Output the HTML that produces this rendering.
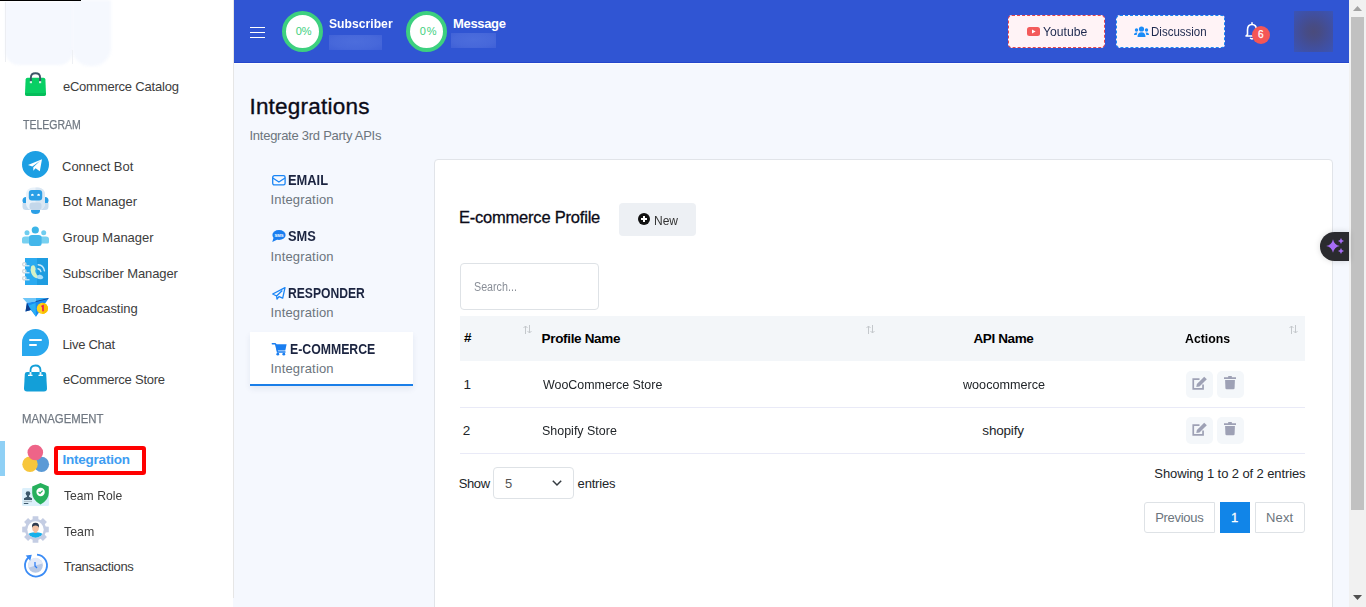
<!DOCTYPE html><html><head><meta charset="utf-8"><title>Integrations</title><style>*{box-sizing:border-box}
html,body{margin:0;padding:0;width:1366px;height:607px;overflow:hidden;background:#f5f8fe;font-family:"Liberation Sans",sans-serif}
.t{position:absolute;white-space:pre;line-height:1}
.a{position:absolute}
svg{position:absolute;overflow:visible}
</style></head><body>
<div class="a" style="left:0;top:0;width:233px;height:607px;background:#fff"></div>
<div class="a" style="left:233px;top:0;width:1px;height:598px;background:#e6e6e6"></div>
<div class="a" style="left:5px;top:2px;width:68px;height:63px;background:#f5f8fe;border-radius:0 0 14px 14px;filter:blur(1.2px)"></div>
<div class="a" style="left:72px;top:0;width:39px;height:66px;background:#f5f8fe;border-radius:0 0 18px 18px;filter:blur(1.5px)"></div>
<div class="a" style="left:5px;top:2px;width:1px;height:60px;background:#eceef2"></div>
<div class="a" style="left:72px;top:50px;width:1px;height:14px;background:#eef0f4"></div>
<div class="a" style="left:0;top:0;width:81px;height:1px;background:#000"></div>
<div class="t" style="left:62.89px;top:80.22px;font-size:13px;letter-spacing:-0.2px;color:#3d3d3d;">eCommerce Catalog</div>
<div class="t" style="left:22.51px;top:118.87px;font-size:12.5px;transform:scaleX(0.8418);transform-origin:0 0;color:#707882;-webkit-text-stroke:0.25px #707882">TELEGRAM</div>
<div class="t" style="left:62.07px;top:160.42px;font-size:13px;letter-spacing:-0.032px;color:#3d3d3d;">Connect Bot</div>
<div class="t" style="left:62.52px;top:195.22px;font-size:13px;letter-spacing:0.023px;color:#3d3d3d;">Bot Manager</div>
<div class="t" style="left:62.57px;top:231.12px;font-size:13px;letter-spacing:0.002px;color:#3d3d3d;">Group Manager</div>
<div class="t" style="left:62.43px;top:267.42px;font-size:13px;letter-spacing:-0.092px;color:#3d3d3d;">Subscriber Manager</div>
<div class="t" style="left:62.42px;top:302.32px;font-size:13px;letter-spacing:-0.058px;color:#3d3d3d;">Broadcasting</div>
<div class="t" style="left:62.42px;top:338.12px;font-size:13px;letter-spacing:-0.278px;color:#3d3d3d;">Live Chat</div>
<div class="t" style="left:62.99px;top:373.42px;font-size:13px;letter-spacing:-0.243px;color:#3d3d3d;">eCommerce Store</div>
<div class="t" style="left:21.75px;top:413.07px;font-size:12.5px;transform:scaleX(0.9084);transform-origin:0 0;color:#707882;-webkit-text-stroke:0.25px #707882">MANAGEMENT</div>
<div class="t" style="left:62.41px;top:453.08px;font-size:13.5px;font-weight:700;letter-spacing:-0.218px;color:#3d9df2;">Integration</div>
<div class="t" style="left:63.67px;top:489.32px;font-size:13px;transform:scaleX(0.9358);transform-origin:0 0;color:#3d3d3d;">Team Role</div>
<div class="t" style="left:63.66px;top:524.92px;font-size:13px;transform:scaleX(0.9491);transform-origin:0 0;color:#3d3d3d;">Team</div>
<div class="t" style="left:63.64px;top:560.22px;font-size:13px;letter-spacing:-0.341px;color:#3d3d3d;">Transactions</div>
<div class="a" style="left:0;top:441px;width:5px;height:35px;background:#8fd0f5"></div>
<div class="a" style="left:54px;top:446px;width:92px;height:29px;border:4px solid #ff0000;border-radius:3px"></div>
<div class="a" style="left:234px;top:0;width:1115px;height:63px;background:#3055d3"></div>
<div class="a" style="left:234px;top:62px;width:1115px;height:1px;background:#2446cc"></div>
<div class="a" style="left:234px;top:63px;width:1115px;height:1px;background:#fff"></div>
<div class="a" style="left:250px;top:26.5px;width:15px;height:1.5px;background:#fff"></div>
<div class="a" style="left:250px;top:31.5px;width:15px;height:1.5px;background:#fff"></div>
<div class="a" style="left:250px;top:36.5px;width:15px;height:1.5px;background:#fff"></div>
<div class="a" style="left:282px;top:11px;width:41px;height:41px;border-radius:50%;background:#fff;border:4px solid #3dd07f"></div>
<div class="a" style="left:406px;top:11px;width:41px;height:41px;border-radius:50%;background:#fff;border:4px solid #3dd07f"></div>
<div class="t" style="left:295.66px;top:26.15px;font-size:11px;letter-spacing:-0.113px;color:#3ecf7e;">0%</div>
<div class="t" style="left:419.86px;top:26.15px;font-size:11px;letter-spacing:0.839px;color:#3ecf7e;">0%</div>
<div class="t" style="left:328.62px;top:16.52px;font-size:13px;font-weight:700;transform:scaleX(0.9368);transform-origin:0 0;color:#ffffff;">Subscriber</div>
<div class="t" style="left:453.12px;top:16.72px;font-size:13px;font-weight:700;letter-spacing:-0.347px;color:#ffffff;">Message</div>
<div class="a" style="left:329px;top:35px;width:53px;height:15px;background:radial-gradient(ellipse at 50% 45%, #4c6ddc 0%, #4768da 60%, #3f60d7 100%);filter:blur(0.5px)"></div>
<div class="a" style="left:451px;top:33px;width:45px;height:15px;background:radial-gradient(ellipse at 50% 45%, #4c6ddc 0%, #4768da 60%, #3f60d7 100%);filter:blur(0.5px)"></div>
<div class="a" style="left:1008px;top:15px;width:97px;height:33px;background:#fff3f6;border:1px dashed #e8464f;border-radius:4px"></div>
<div class="a" style="left:1116px;top:15px;width:109px;height:33px;background:#fff3f6;border:1px dashed #1a86f5;border-radius:4px"></div>
<div class="t" style="left:1042.81px;top:25.12px;font-size:13px;transform:scaleX(0.9357);transform-origin:0 0;color:#1e2a4f;">Youtube</div>
<div class="t" style="left:1151.25px;top:25.22px;font-size:13px;transform:scaleX(0.8859);transform-origin:0 0;color:#1e2a4f;">Discussion</div>
<svg style="left:1027px;top:27px" width="13" height="9" viewBox="0 0 13 9"><rect x="0" y="0" width="13" height="9" rx="2.5" fill="#f35b5b"/><path d="M5 2.6 L8.6 4.5 L5 6.4Z" fill="#fff"/></svg>
<svg style="left:1134px;top:26px" width="15" height="11" viewBox="0 0 15 11"><circle cx="7.5" cy="3" r="2.6" fill="#1b8cf8"/><path d="M3.5 11 Q3.5 6.3 7.5 6.3 Q11.5 6.3 11.5 11Z" fill="#1b8cf8"/><circle cx="2.5" cy="4" r="1.7" fill="#1b8cf8"/><circle cx="12.5" cy="4" r="1.7" fill="#1b8cf8"/><path d="M0 9 Q0 6.5 2.5 6.5 L3.5 6.5 Q2.7 7.8 2.7 9Z" fill="#1b8cf8"/><path d="M15 9 Q15 6.5 12.5 6.5 L11.5 6.5 Q12.3 7.8 12.3 9Z" fill="#1b8cf8"/></svg>
<svg style="left:1245px;top:21px" width="14" height="19" viewBox="0 0 14 19"><path d="M7 1.2 V3 M2.5 13.5 V9 Q2.5 3.5 7 3.5 Q11.5 3.5 11.5 9 V13.5 L13 15 H1 L2.5 13.5Z M5 17 Q7 18.8 9 17" fill="none" stroke="#fff" stroke-width="1.6" stroke-linejoin="round"/></svg>
<div class="a" style="left:1252px;top:26px;width:18px;height:18px;border-radius:50%;background:#f45656"></div>
<div class="t" style="left:1258.02px;top:30.32px;font-size:10px;letter-spacing:0px;color:#ffffff;-webkit-text-stroke:0.25px #fff">6</div>
<div class="a" style="left:1294px;top:11px;width:39px;height:41px;background:radial-gradient(circle at 50% 50%, #4a4b7c 0%, #474c86 25%, #414f9e 60%, #3a54b6 100%)"></div>
<div class="a" style="left:1349px;top:0;width:17px;height:607px;background:#f1f1f1"></div>
<div class="a" style="left:1351px;top:17px;width:13px;height:493px;background:#c1c1c1"></div>
<svg style="left:1353px;top:6px" width="9" height="5" viewBox="0 0 9 5"><path d="M0 5 L4.5 0 L9 5Z" fill="#a3a3a3"/></svg>
<svg style="left:1353px;top:595px" width="9" height="5" viewBox="0 0 9 5"><path d="M0 0 L4.5 5 L9 0Z" fill="#505050"/></svg>
<div class="t" style="left:249.42px;top:95.7px;font-size:22.5px;letter-spacing:0.224px;color:#0b0b18;-webkit-text-stroke:0.35px #0b0b18">Integrations</div>
<div class="t" style="left:249.5px;top:128.92px;font-size:13px;letter-spacing:-0.264px;color:#6c757d;">Integrate 3rd Party APIs</div>
<div class="a" style="left:250px;top:332px;width:163px;height:54px;background:#fff;border-bottom:2px solid #1a7ee8;box-shadow:0 3px 6px rgba(20,50,120,0.08)"></div>
<div class="t" style="left:287.5px;top:172.82px;font-size:14px;font-weight:700;transform:scaleX(0.9195);transform-origin:0 0;color:#1b2440;">EMAIL</div>
<div class="t" style="left:270.5px;top:193.22px;font-size:13px;letter-spacing:0.164px;color:#6c757d;">Integration</div>
<div class="t" style="left:287.51px;top:228.72px;font-size:14px;font-weight:700;transform:scaleX(0.9164);transform-origin:0 0;color:#1b2440;">SMS</div>
<div class="t" style="left:270.5px;top:249.82px;font-size:13px;letter-spacing:0.164px;color:#6c757d;">Integration</div>
<div class="t" style="left:287.56px;top:286.32px;font-size:14px;font-weight:700;transform:scaleX(0.8659);transform-origin:0 0;color:#1b2440;">RESPONDER</div>
<div class="t" style="left:270.5px;top:306.22px;font-size:13px;letter-spacing:0.164px;color:#6c757d;">Integration</div>
<div class="t" style="left:289.54px;top:342.12px;font-size:14px;font-weight:700;transform:scaleX(0.8775);transform-origin:0 0;color:#1b2440;">E-COMMERCE</div>
<div class="t" style="left:270.5px;top:362.12px;font-size:13px;letter-spacing:0.164px;color:#6c757d;">Integration</div>
<div class="a" style="left:434px;top:159px;width:899px;height:460px;background:#fff;border:1px solid #e1e4e9;border-radius:4px"></div>
<div class="t" style="left:458.89px;top:208.95px;font-size:16.5px;letter-spacing:-0.203px;color:#0b0b18;-webkit-text-stroke:0.3px #0b0b18">E-commerce Profile</div>
<div class="a" style="left:619px;top:203px;width:77px;height:33px;background:#edf0f4;border-radius:4px"></div>
<div class="t" style="left:653.71px;top:213.62px;font-size:13px;transform:scaleX(0.9241);transform-origin:0 0;color:#333333;">New</div>
<svg style="left:638px;top:213px" width="12" height="12" viewBox="0 0 12 12"><circle cx="6" cy="6" r="6" fill="#111"/><path d="M6 3 V9 M3 6 H9" stroke="#fff" stroke-width="2"/></svg>
<div class="a" style="left:460px;top:263px;width:139px;height:47px;background:#fff;border:1px solid #dee2e6;border-radius:4px"></div>
<div class="t" style="left:473.71px;top:281.27px;font-size:12.5px;transform:scaleX(0.8567);transform-origin:0 0;color:#8a8f98;">Search...</div>
<div class="a" style="left:460px;top:316px;width:845px;height:45px;background:#f3f6f9"></div>
<div class="a" style="left:460px;top:407px;width:845px;height:1px;background:#e9eaf7"></div>
<div class="a" style="left:460px;top:453px;width:845px;height:1px;background:#e9eaf7"></div>
<div class="t" style="left:464.1px;top:331.18px;font-size:13.5px;font-weight:700;letter-spacing:0px;color:#000000;">#</div>
<div class="t" style="left:541.61px;top:331.88px;font-size:13.5px;font-weight:700;letter-spacing:-0.337px;color:#000000;">Profile Name</div>
<div class="t" style="left:973.52px;top:331.88px;font-size:13.5px;font-weight:700;letter-spacing:-0.396px;color:#000000;">API Name</div>
<div class="t" style="left:1185.47px;top:331.98px;font-size:13.5px;font-weight:700;transform:scaleX(0.9113);transform-origin:0 0;color:#000000;">Actions</div>
<div class="t" style="left:463.54px;top:377.74px;font-size:13.5px;letter-spacing:0px;color:#212529;">1</div>
<div class="t" style="left:542.53px;top:377.74px;font-size:13.5px;transform:scaleX(0.9209);transform-origin:0 0;color:#212529;">WooCommerce Store</div>
<div class="t" style="left:962.76px;top:377.74px;font-size:13.5px;transform:scaleX(0.9342);transform-origin:0 0;color:#212529;">woocommerce</div>
<div class="t" style="left:462.87px;top:424.44px;font-size:13.5px;letter-spacing:0px;color:#212529;">2</div>
<div class="t" style="left:541.72px;top:424.44px;font-size:13.5px;transform:scaleX(0.9232);transform-origin:0 0;color:#212529;">Shopify Store</div>
<div class="t" style="left:982.37px;top:424.44px;font-size:13.5px;letter-spacing:-0.198px;color:#212529;">shopify</div>
<svg style="left:523px;top:325px" width="9" height="9" viewBox="0 0 9 9"><path d="M2.5 9 V1 M0.5 3 L2.5 1 L4.5 3 M6.5 0 V8 M4.5 6 L6.5 8 L8.5 6" fill="none" stroke="#c4c8cc" stroke-width="1"/></svg>
<svg style="left:866px;top:325px" width="9" height="9" viewBox="0 0 9 9"><path d="M2.5 9 V1 M0.5 3 L2.5 1 L4.5 3 M6.5 0 V8 M4.5 6 L6.5 8 L8.5 6" fill="none" stroke="#c4c8cc" stroke-width="1"/></svg>
<svg style="left:1289px;top:325px" width="9" height="9" viewBox="0 0 9 9"><path d="M2.5 9 V1 M0.5 3 L2.5 1 L4.5 3 M6.5 0 V8 M4.5 6 L6.5 8 L8.5 6" fill="none" stroke="#c4c8cc" stroke-width="1"/></svg>
<div class="a" style="left:1186px;top:371px;width:27px;height:27px;background:#f4f7fa;border-radius:5px"></div>
<div class="a" style="left:1217px;top:371px;width:27px;height:27px;background:#f4f7fa;border-radius:5px"></div>
<svg style="left:1192px;top:376px" width="16" height="14" viewBox="0 0 16 14"><path d="M7.5 3.05 H1.25 V12.85 H11.05 V8.5" fill="none" stroke="#9ea1b5" stroke-width="1.7"/><path d="M4.3 11 L4.9 8 L12.2 0.7 L14.8 3.3 L7.5 10.6Z" fill="#9ea1b5"/></svg>
<svg style="left:1224px;top:375.7px" width="13" height="14" viewBox="0 0 13 14"><path d="M0 1.3 H12 V3 H0Z M4.2 0 H7.8 V1.5 H4.2Z" fill="#9ea1b5"/><path d="M1.1 3.9 H10.9 L10.6 12 Q10.5 13.2 9.3 13.2 H2.7 Q1.5 13.2 1.4 12Z" fill="#9ea1b5"/></svg>
<div class="a" style="left:1186px;top:417px;width:27px;height:27px;background:#f4f7fa;border-radius:5px"></div>
<div class="a" style="left:1217px;top:417px;width:27px;height:27px;background:#f4f7fa;border-radius:5px"></div>
<svg style="left:1192px;top:422px" width="16" height="14" viewBox="0 0 16 14"><path d="M7.5 3.05 H1.25 V12.85 H11.05 V8.5" fill="none" stroke="#9ea1b5" stroke-width="1.7"/><path d="M4.3 11 L4.9 8 L12.2 0.7 L14.8 3.3 L7.5 10.6Z" fill="#9ea1b5"/></svg>
<svg style="left:1224px;top:421.7px" width="13" height="14" viewBox="0 0 13 14"><path d="M0 1.3 H12 V3 H0Z M4.2 0 H7.8 V1.5 H4.2Z" fill="#9ea1b5"/><path d="M1.1 3.9 H10.9 L10.6 12 Q10.5 13.2 9.3 13.2 H2.7 Q1.5 13.2 1.4 12Z" fill="#9ea1b5"/></svg>
<div class="t" style="left:458.73px;top:476.72px;font-size:13px;letter-spacing:-0.402px;color:#212529;">Show</div>
<div class="a" style="left:493px;top:467px;width:81px;height:32px;background:#fff;border:1px solid #dee2e6;border-radius:4px"></div>
<div class="t" style="left:505.07px;top:476.72px;font-size:13px;letter-spacing:0px;color:#555555;">5</div>
<div class="t" style="left:577.59px;top:476.72px;font-size:13px;letter-spacing:-0.175px;color:#212529;">entries</div>
<svg style="left:552px;top:480px" width="10" height="6" viewBox="0 0 10 6"><path d="M0.8 0.8 L5 5 L9.2 0.8" fill="none" stroke="#343a40" stroke-width="1.5"/></svg>
<div class="t" style="left:1154.33px;top:467.22px;font-size:13px;letter-spacing:-0.103px;color:#212529;">Showing 1 to 2 of 2 entries</div>
<div class="a" style="left:1144px;top:502px;width:71px;height:31px;background:#fff;border:1px solid #dee2e6;border-radius:3px 0 0 3px"></div>
<div class="a" style="left:1220px;top:502px;width:30px;height:31px;background:#1185e8"></div>
<div class="a" style="left:1255px;top:502px;width:50px;height:31px;background:#fff;border:1px solid #dee2e6;border-radius:0 3px 3px 0"></div>
<div class="t" style="left:1155.22px;top:511.22px;font-size:13px;letter-spacing:-0.302px;color:#6c757d;">Previous</div>
<div class="t" style="left:1230.88px;top:511.22px;font-size:13px;letter-spacing:0px;color:#ffffff;-webkit-text-stroke:0.3px #fff">1</div>
<div class="t" style="left:1266.02px;top:511.22px;font-size:13px;letter-spacing:0.145px;color:#6c757d;">Next</div>
<div class="a" style="left:1320px;top:232px;width:29px;height:29px;background:#2b2b2f;border-radius:15px 0 0 15px;box-shadow:0 0 6px rgba(0,0,0,0.15)"></div>
<svg style="left:1326px;top:236px" width="20" height="20" viewBox="0 0 20 20"><path d="M7 3.2 Q8.1 8.9 13.8 10 Q8.1 11.1 7 16.8 Q5.9 11.1 0.2 10 Q5.9 8.9 7 3.2Z" fill="#a66cf5"/><path d="M15 2 Q15.5 4.5 18 5 Q15.5 5.5 15 8 Q14.5 5.5 12 5 Q14.5 4.5 15 2Z" fill="#a66cf5"/><path d="M15 12 Q15.5 14.5 18 15 Q15.5 15.5 15 18 Q14.5 15.5 12 15 Q14.5 14.5 15 12Z" fill="#a66cf5"/></svg>
<svg style="left:24px;top:72px" width="23" height="25" viewBox="0 0 23 25"><path d="M3.5 5.8 H19.5 Q21.3 5.8 21.4 7.6 L22 21.5 Q22 24 19.5 24 H3.5 Q1 24 1 21.5 L1.6 7.6 Q1.7 5.8 3.5 5.8Z" fill="#08cf64"/><path d="M1.05 21 H21.95 L22 21.5 Q22 24 19.5 24 H3.5 Q1 24 1 21.5Z" fill="#05bd5a"/><path d="M6.9 9.5 V5.5 Q6.9 1.3 11.5 1.3 Q16.1 1.3 16.1 5.5 V9.5" fill="none" stroke="#3e5668" stroke-width="1.9"/><rect x="5.8" y="9.2" width="2.2" height="2" fill="#d8f5e4"/><rect x="15" y="9.2" width="2.2" height="2" fill="#d8f5e4"/></svg>
<svg style="left:22px;top:151px" width="27" height="27" viewBox="0 0 27 27"><circle cx="13.5" cy="13.5" r="13.5" fill="#1d9fe3"/><path d="M6 14 L20 8.2 L17.8 20.2 L13.6 17.2 L11.3 19.8 L11.3 16.2 L18.2 9.8 L10.3 15.4Z" fill="#fff"/></svg>
<svg style="left:22px;top:187px" width="27" height="27" viewBox="0 0 27 27"><defs><clipPath id="bh"><rect x="13.5" y="0" width="14" height="27"/></clipPath></defs><path d="M4 10 H8 V17 H4 Q0.5 17 0.5 13.5 Q0.5 10 4 10Z" fill="#2b9fe6"/><path d="M23 10 H19 V17 H23 Q26.5 17 26.5 13.5 Q26.5 10 23 10Z" fill="#2b9fe6"/><path d="M0.5 16 H8 V23 H4 Q0.5 23 0.5 19.5Z" fill="#c9dcee"/><path d="M26.5 16 H19 V23 H23 Q26.5 23 26.5 19.5Z" fill="#c9dcee"/><rect x="4" y="0.5" width="19" height="23" rx="7" fill="#e9f2fa"/><rect x="4" y="0.5" width="19" height="23" rx="7" fill="#dae7f3" clip-path="url(#bh)"/><rect x="6.8" y="3" width="13.4" height="10.5" rx="3" fill="#2b9fe6"/><path d="M9 8.8 Q9 6.8 10.4 6.8 Q11.8 6.8 11.8 8.8Z M15.2 8.8 Q15.2 6.8 16.6 6.8 Q18 6.8 18 8.8Z" fill="#fff"/><rect x="7.5" y="15.5" width="12" height="7.5" rx="3" fill="#c3d7ea"/><path d="M9 23 H18 V24 Q18 27 13.5 27 Q9 27 9 24Z" fill="#2b9fe6"/></svg>
<svg style="left:22px;top:226px" width="27" height="20" viewBox="0 0 27 20"><circle cx="13.3" cy="4" r="3.6" fill="#3cb5e8"/><circle cx="5" cy="6.8" r="2.5" fill="#6fcdef"/><circle cx="21.7" cy="6.8" r="2.5" fill="#6fcdef"/><path d="M0 13 Q0 10.5 3 10.5 H8 V17.5 H1.5 Q0 17.5 0 16Z" fill="#77d0f0"/><path d="M27 13 Q27 10.5 24 10.5 H19 V17.5 H25.5 Q27 17.5 27 16Z" fill="#77d0f0"/><path d="M7 11.5 Q7 9 10 9 H16.6 Q19.6 9 19.6 11.5 V17.5 Q19.6 20 17 20 H9.6 Q7 20 7 17.5Z" fill="#43b6ea"/></svg>
<svg style="left:22px;top:258px" width="27" height="27" viewBox="0 0 27 27"><rect x="3" y="0" width="23" height="27" fill="#2aaaf0"/><rect x="15" y="0" width="11" height="27" fill="#1e9ce0"/><g fill="none" stroke="#d3dade" stroke-width="1.3"><circle cx="2.3" cy="6.3" r="1.7"/><circle cx="2.3" cy="13.3" r="1.7"/><circle cx="2.3" cy="20.3" r="1.7"/></g><g stroke="#e9f5fc" stroke-width="1.1"><path d="M3.5 7.8 H7.5"/><path d="M3.5 14.8 H7.5"/><path d="M3.5 21.8 H7.5"/></g><path d="M9.2 8.3 Q10.8 6.8 12.3 7.6 Q13.8 9.5 13.7 11.5 Q12.8 12.6 13.6 14.6 Q14.6 16.5 15 17.2 V20.3 Q11.2 19.8 9.3 15.2 Q8 11.6 9.2 8.3Z" fill="#d5f1c6"/><path d="M15 17.2 Q16.3 17.6 17.8 16.6 Q20.5 17.2 21.4 19.2 Q21 21 19 21.2 Q16.8 21.3 15 20.3Z" fill="#a7ddf8"/><g fill="none" stroke="#c6e8fa" stroke-width="1.4" stroke-linecap="round"><path d="M16 10.8 Q18.3 11.2 18.9 13.6"/><path d="M16.2 6.8 Q21.3 7.2 22.5 12.8"/></g></svg>
<svg style="left:22px;top:297px" width="28" height="21" viewBox="0 0 28 21"><path d="M0.6 1 L13.4 1 L13.6 4.5 L4.9 5.7Z" fill="#6ec6f8"/><path d="M13.4 1 L26.9 1 L13.6 4.5Z" fill="#33aef5"/><path d="M4.9 5.7 L13.6 4.5 L26.9 1 L14 19.8 L8.9 13 L3.5 14.6Z" fill="#1a8cf0"/><path d="M4.9 5.7 L6.5 8.5 L8.9 13 L3.5 14.6Z" fill="#0d3d8c"/><path d="M6.5 8.5 L13.6 6 L14 19.8Z" fill="#2ab0f6"/><path d="M13.6 4.6 L26.3 1.5" stroke="#0f4a9e" stroke-width="1"/><circle cx="20.4" cy="11.4" r="5.6" fill="#ffd21f"/><path d="M20.4 5.8 A5.6 5.6 0 0 1 20.4 17Z" fill="#f9bf00"/><path d="M19.4 9.6 L21 8.9 V14.3" fill="none" stroke="#e8175d" stroke-width="1.6"/></svg>
<div class="a" style="left:22px;top:329px;width:27px;height:27px;background:#29a8ee;border-radius:13.5px 13.5px 13.5px 0"></div>
<div class="a" style="left:29px;top:339px;width:13px;height:2px;background:#fff;border-radius:1px"></div>
<div class="a" style="left:29px;top:344px;width:8px;height:2px;background:#fff;border-radius:1px"></div>
<svg style="left:23px;top:364px" width="25" height="28" viewBox="0 0 25 28"><path d="M7.5 11 V6.5 Q7.5 1.5 12.5 1.5 Q17.5 1.5 17.5 6.5 V11" fill="none" stroke="#139fd8" stroke-width="1.8"/><path d="M4 8 H21 Q23 8 23.2 10 L24 24.5 Q24 27.5 21 27.5 H4 Q1 27.5 1 24.5 L1.8 10 Q2 8 4 8Z" fill="#139fd8"/><path d="M5 11.3 H9.5 M15.5 11.3 H20" stroke="#ffffff" stroke-width="1.3"/><path d="M7.5 8 V11.3 M17.5 8 V11.3" stroke="#eaf6fb" stroke-width="1.8"/></svg>
<svg style="left:22px;top:444px" width="28" height="29" viewBox="0 0 28 29"><circle cx="19.5" cy="20.3" r="7.6" fill="#5b9ad6"/><circle cx="8" cy="20.3" r="7.7" fill="#f7c63b"/><circle cx="13.3" cy="8.5" r="7.8" fill="#ee6488"/></svg>
<svg style="left:22px;top:482px" width="27" height="24" viewBox="0 0 27 24"><rect x="0" y="6" width="27" height="18" rx="1.5" fill="#dcf0fb"/><circle cx="6" cy="11.6" r="2.3" fill="#3d596c"/><path d="M5 13 H7 V14.8 L10 16.2 V18 H2 V16.2 L5 14.8Z" fill="#3d596c"/><rect x="1.8" y="18.8" width="8.2" height="1.3" fill="#b4c3cc"/><rect x="1.8" y="21" width="4.5" height="1" fill="#3d596c"/><path d="M18.5 1 L26.8 4.5 V11 Q26.8 18 18.5 22.5 Q10.2 18 10.2 11 V4.5Z" fill="#26b05c"/><circle cx="18.6" cy="10" r="4.2" fill="#fff"/><path d="M16.6 10 L18 11.4 L20.6 8.7" fill="none" stroke="#26b05c" stroke-width="1.2"/></svg>
<svg style="left:22px;top:516px" width="27" height="27" viewBox="0 0 27 27"><defs><clipPath id="gc"><circle cx="13.5" cy="13.5" r="8.2"/></clipPath></defs><path d="M10.67 0.20 L16.33 0.20 L16.42 3.31 L18.64 4.23 L20.91 2.09 L24.91 6.09 L22.77 8.36 L23.69 10.58 L26.80 10.67 L26.80 16.33 L23.69 16.42 L22.77 18.64 L24.91 20.91 L20.91 24.91 L18.64 22.77 L16.42 23.69 L16.33 26.80 L10.67 26.80 L10.58 23.69 L8.36 22.77 L6.09 24.91 L2.09 20.91 L4.23 18.64 L3.31 16.42 L0.20 16.33 L0.20 10.67 L3.31 10.58 L4.23 8.36 L2.09 6.09 L6.09 2.09 L8.36 4.23 L10.58 3.31Z" fill="#c4cde3"/><circle cx="13.5" cy="13.5" r="8.2" fill="#fff"/><g clip-path="url(#gc)"><path d="M5 19.5 Q7 16.3 13.5 16.3 Q20 16.3 22 19.5 V23 H5Z" fill="#17b0ea"/><rect x="12.2" y="14" width="2.6" height="3" fill="#eab394"/><ellipse cx="13.5" cy="12" rx="3.3" ry="4.1" fill="#f2c0a2"/><path d="M10 12 Q9.3 6.8 13.5 6.8 Q17.7 6.8 17 12 Q16.6 9.6 13.5 9.4 Q10.4 9.6 10 12Z" fill="#2f3b4f"/></g></svg>
<svg style="left:23px;top:553px" width="25" height="25" viewBox="0 0 25 25"><circle cx="12.5" cy="12.5" r="7.3" fill="#b9c9e5"/><path d="M12.5 12.5 L19.6 10.5 A7.3 7.3 0 0 0 5.2 12.5 A7.3 7.3 0 0 0 5.6 14.8Z" fill="#e3eaf8"/><path d="M12 9 V13 L14 15" fill="none" stroke="#2f7ef5" stroke-width="1.3"/><path d="M14 1.6 A11 11 0 1 1 5.5 4.5" fill="none" stroke="#3a8bf5" stroke-width="1.8"/><path d="M2.7 2.5 L8.8 1.8 L7.2 7.8Z" fill="#3a8bf5"/></svg>
<svg style="left:272px;top:175px" width="14" height="11" viewBox="0 0 14 11"><rect x="0.7" y="0.7" width="12.4" height="9.2" rx="1.6" fill="none" stroke="#1a85f5" stroke-width="1.3"/><path d="M0.8 3 L6.9 7 L13 3" fill="none" stroke="#1a85f5" stroke-width="1.3"/></svg>
<svg style="left:272px;top:230px" width="14" height="13" viewBox="0 0 14 13"><ellipse cx="7" cy="5" rx="6.6" ry="4.9" fill="#1a7ef0"/><path d="M1.6 7.5 L0.3 12 L5.5 9.5Z" fill="#1a7ef0"/><text x="7" y="6.6" font-family="Liberation Sans" font-weight="700" font-size="4.2" fill="#fff" text-anchor="middle">SMS</text></svg>
<svg style="left:272px;top:287px" width="14" height="13" viewBox="0 0 14 13"><path d="M0.7 7 L13 0.6 L10.7 11.2 L7 9.6 L5 12 L4.6 9 L0.7 7Z M4.6 9 L10.3 3.5" fill="none" stroke="#1a85f5" stroke-width="1.3" stroke-linejoin="round"/></svg>
<svg style="left:272px;top:343px" width="15" height="13" viewBox="0 0 15 13"><path d="M0.3 0.7 H2.8 Q3.6 0.7 3.8 1.5 L5.5 9 H13" fill="none" stroke="#1a7ef0" stroke-width="1.4" stroke-linecap="round"/><path d="M3.4 1.3 H14.6 L13.3 7.5 H4.8Z" fill="#1a7ef0"/><circle cx="5.8" cy="11.2" r="1.4" fill="#1a7ef0"/><circle cx="11.8" cy="11.2" r="1.4" fill="#1a7ef0"/></svg>
</body></html>
